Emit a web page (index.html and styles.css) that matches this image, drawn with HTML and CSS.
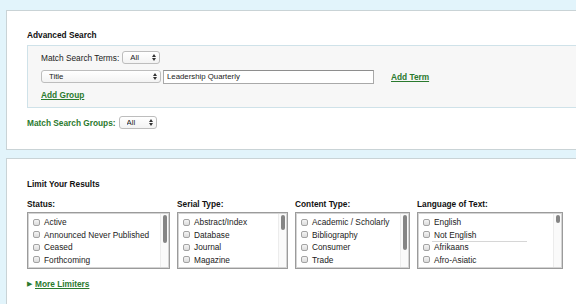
FILE: index.html
```html
<!DOCTYPE html>
<html lang="en">
<head>
  <meta charset="UTF-8" />
  <title>Advanced Search</title>
  <link rel="stylesheet" href="styles.css">
</head>
<body>
  <div class="panel search-panel">
    <h4 class="section-title">Advanced Search</h4>

    <div class="group">
      <div class="row">
        <span class="label">Match Search Terms:</span>
        <span class="select-wrap small">
          <select><option>All</option></select>
          <svg class="arrows" width="4" height="7" viewBox="0 0 4 7"><path d="M0 3L2 0L4 3Z M0 4L2 7L4 4Z" fill="#333"/></svg>
        </span>
      </div>
      <div class="row">
        <span class="select-wrap field">
          <select><option>Title</option></select>
          <svg class="arrows" width="4" height="7" viewBox="0 0 4 7"><path d="M0 3L2 0L4 3Z M0 4L2 7L4 4Z" fill="#333"/></svg>
        </span>
        <input class="term" type="text" value="Leadership Quarterly">
        <a href="#" class="link add-term">Add Term</a>
      </div>
      <div class="row">
        <a href="#" class="link">Add Group</a>
      </div>
    </div>

    <div class="row groups-row">
      <span class="label green">Match Search Groups:</span>
      <span class="select-wrap small">
        <select><option>All</option></select>
        <svg class="arrows" width="4" height="7" viewBox="0 0 4 7"><path d="M0 3L2 0L4 3Z M0 4L2 7L4 4Z" fill="#333"/></svg>
      </span>
    </div>
  </div>

  <div class="panel limit-panel">
    <h4 class="section-title">Limit Your Results</h4>

    <div class="limiters">
      <div class="limiter">
        <div class="limiter-title">Status:</div>
        <div class="listbox w-status">
          <label><span class="box"></span>Active</label>
          <label><span class="box"></span>Announced Never Published</label>
          <label><span class="box"></span>Ceased</label>
          <label><span class="box"></span>Forthcoming</label>
          <label><span class="box"></span></label>
          <div class="scroll"><div class="thumb" style="height: 28px"></div></div>
        </div>
      </div>
      <div class="limiter">
        <div class="limiter-title">Serial Type:</div>
        <div class="listbox w-serial">
          <label><span class="box"></span>Abstract/Index</label>
          <label><span class="box"></span>Database</label>
          <label><span class="box"></span>Journal</label>
          <label><span class="box"></span>Magazine</label>
          <label><span class="box"></span></label>
          <div class="scroll"><div class="thumb" style="height: 15px"></div></div>
        </div>
      </div>
      <div class="limiter">
        <div class="limiter-title">Content Type:</div>
        <div class="listbox w-content">
          <label><span class="box"></span>Academic / Scholarly</label>
          <label><span class="box"></span>Bibliography</label>
          <label><span class="box"></span>Consumer</label>
          <label><span class="box"></span>Trade</label>
          <label><span class="box"></span></label>
          <div class="scroll"><div class="thumb" style="height: 35px"></div></div>
        </div>
      </div>
      <div class="limiter">
        <div class="limiter-title">Language of Text:</div>
        <div class="listbox w-lang">
          <label><span class="box"></span>English</label>
          <label class="divided"><span class="box"></span>Not English</label>
          <label><span class="box"></span>Afrikaans</label>
          <label><span class="box"></span>Afro-Asiatic</label>
          <label><span class="box"></span></label>
          <div class="scroll"><div class="thumb" style="height: 8px"></div></div>
        </div>
      </div>
    </div>

    <a href="#" class="more"><span class="tri">&#9654;</span><span class="link">More Limiters</span></a>
  </div>
</body>
</html>
```

FILE: styles.css
```css
* {
  box-sizing: border-box;
}

body {
  margin: 0;
  padding: 10px 0 0 6px;
  background-color: #e2f4fb;
  font-family: 'Liberation Sans', Arial, sans-serif;
  font-size: 8.3px;
  color: #222;
  overflow: hidden;
}

.panel {
  background-color: #fff;
  border: 1px solid #c9d3d6;
  border-right: none;
  margin-right: -20px;
  padding: 0 0 0 20px;
}

.search-panel {
  height: 140px;
  padding-top: 19px;
}

.limit-panel {
  margin-top: 8px;
  height: 160px;
  padding-top: 20px;
}

.section-title {
  margin: 0;
  font-size: 8.3px;
  font-weight: bold;
  line-height: 11px;
  color: #111;
}

.group {
  margin-top: 4px;
  background-color: #f7f7f7;
  border: 1px solid #cfe2e9;
  border-right: none;
  padding: 5px 0 6px 13px;
  height: 63px;
}

.row {
  display: flex;
  align-items: center;
  gap: 3px;
  height: 13px;
  margin-bottom: 6px;
}

.row:last-child {
  margin-bottom: 0;
  margin-top: -1px;
}

.label {
  color: #222;
}

.green {
  color: #2a7a2e;
  font-weight: bold;
}

.select-wrap {
  position: relative;
  display: inline-block;
  height: 13px;
}

.select-wrap select {
  appearance: none;
  -webkit-appearance: none;
  display: block;
  width: 100%;
  height: 13px;
  border: 1px solid #bdbdbd;
  border-radius: 3px;
  background: linear-gradient(#ffffff, #f3f3f3);
  font-family: 'Liberation Sans', Arial, sans-serif;
  font-size: 7.8px;
  padding: 0 0 0 7px;
  color: #222;
  line-height: 11px;
}

.select-wrap .arrows {
  position: absolute;
  right: 4px;
  top: 3px;
  pointer-events: none;
}

.small {
  width: 38px;
}

.field {
  width: 120px;
}

.term {
  width: 211px;
  height: 14px;
  border: 1px solid #a9a9a9;
  border-top-color: #8e8e8e;
  padding: 0 3px;
  font-family: 'Liberation Sans', Arial, sans-serif;
  font-size: 7.8px;
  color: #222;
  margin-left: -1px;
}

.link {
  color: #2a7a2e;
  font-weight: bold;
  text-decoration: underline;
}

.add-term {
  margin-left: 14px;
}

.groups-row {
  margin-top: 8px;
  gap: 3px;
}

.search-panel .groups-row:last-child {
  margin-top: 8px;
}

.limiters {
  display: flex;
  gap: 7px;
  margin-top: 9px;
}

.limiter-title {
  font-weight: bold;
  line-height: 11px;
  margin-bottom: 2px;
  color: #111;
}

.listbox {
  position: relative;
  height: 57px;
  border: 1px solid #9b9b9b;
  box-shadow: inset 0 0 0 1px #d4d4d4;
  padding: 3px 0 0 5px;
  overflow: hidden;
  background-color: #fff;
}

.listbox label {
  display: flex;
  align-items: center;
  height: 12.5px;
  gap: 4px;
  white-space: nowrap;
  color: #222;
}

.listbox label.divided {
  position: relative;
}

.listbox label.divided::after {
  content: "";
  position: absolute;
  left: 9px;
  width: 95px;
  bottom: -1px;
  border-bottom: 1px solid #d6d6d6;
}

.box {
  display: inline-block;
  width: 7px;
  height: 7px;
  border: 1px solid #a3a3a3;
  border-radius: 2px;
  background: linear-gradient(#f4f4f4, #dcdcdc);
}

.w-status {
  width: 143px;
}

.w-serial {
  width: 111px;
}

.w-content {
  width: 115px;
}

.w-lang {
  width: 146px;
}

.scroll {
  position: absolute;
  top: 1px;
  right: 1px;
  bottom: 1px;
  width: 8px;
  border-left: 1px solid #ececec;
  background-color: #fafafa;
  padding: 1px 0 0 2px;
}

.thumb {
  width: 4px;
  border-radius: 2px;
  background-color: #858585;
}

.more {
  display: inline-flex;
  align-items: center;
  gap: 3px;
  margin-top: 10px;
  text-decoration: none;
}

.tri {
  color: #2a7a2e;
  font-size: 7px;
}
```
